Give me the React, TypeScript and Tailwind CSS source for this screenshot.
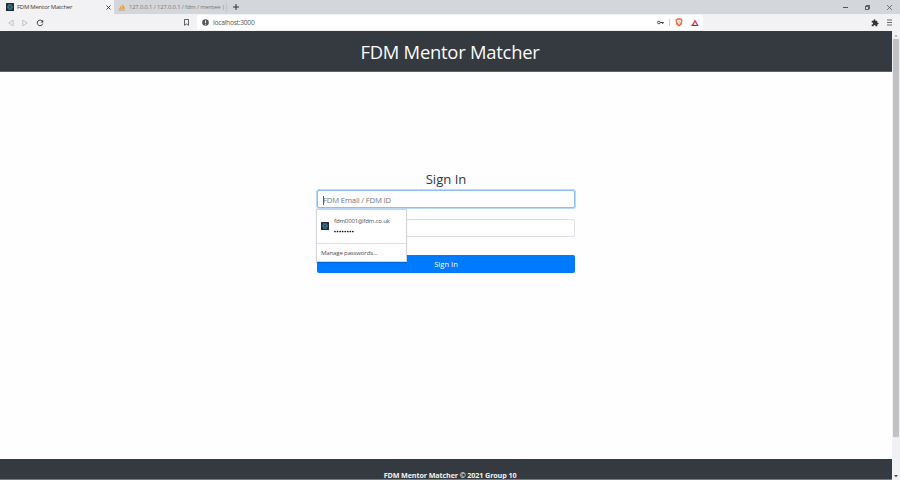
import React from "react";

function AppIcon({ className }: { className: string }) {
  return (
    <svg viewBox="0 0 8 8" className={className}>
      <rect width="8" height="8" rx="0.6" fill="#20272e" />
      <g fill="none" stroke="#4288a6" strokeWidth="0.6">
        <ellipse cx="4" cy="4" rx="3" ry="1.2" />
        <ellipse cx="4" cy="4" rx="3" ry="1.2" transform="rotate(60 4 4)" />
        <ellipse cx="4" cy="4" rx="3" ry="1.2" transform="rotate(120 4 4)" />
      </g>
    </svg>
  );
}

function TabStrip() {
  return (
    <div className="flex h-[14px] items-stretch bg-[#d3d6da] text-[6px] leading-[14px] whitespace-nowrap">
      <div className="flex w-[114px] items-center bg-[#f2f1f3] pl-[6px] text-[#3c3c40]">
        <AppIcon className="h-[8px] w-[8px]" />
        <span className="ml-[3px] w-[89px] tracking-[-0.26px]">FDM Mentor Matcher</span>
        <svg viewBox="0 0 5 5" className="h-[5px] w-[5px]" stroke="#333" strokeWidth="0.9">
          <path d="M.5 .5 4.5 4.5M4.5 .5 .5 4.5" />
        </svg>
      </div>
      <div className="flex w-[112px] items-center pl-[4px] text-[#74777c]">
        <svg viewBox="0 0 8 7" className="h-[7px] w-[8px]">
          <path d="M.4 5.4 3.3 1.2 3.5 5.2ZM3.9 4.9 4.3.5Q6.8 2 6.9 4.8Z" fill="#eda13d" />
          <path d="M.2 6.1Q4 5 7.8 5.7L7 6.6H1Z" fill="#b99c83" />
        </svg>
        <span className="ml-[3px] w-[97px] text-[5.8px] tracking-[-0.13px]">127.0.0.1 / 127.0.0.1 / fdm / mentee | :</span>
      </div>
      <div className="flex flex-1 items-center">
        <span className="h-[9px] w-px bg-[#c3c6ca]" />
        <svg viewBox="0 0 6 6" className="ml-[6px] h-[6px] w-[6px]" stroke="#333" strokeWidth="1">
          <path d="M3 0V6M0 3H6" />
        </svg>
      </div>
      <div className="flex items-center gap-[17px] pr-[8px]">
        <svg viewBox="0 0 5 5" className="h-[5px] w-[5px]" stroke="#333" strokeWidth="0.8"><path d="M0 2.5H5" /></svg>
        <svg viewBox="0 0 5 5" className="h-[5px] w-[5px]" stroke="#333" strokeWidth="0.8" fill="none">
          <path d="M.4 1.4H3.6V4.6H.4ZM1.4 1.4V.4H4.6V3.6H3.6" />
        </svg>
        <svg viewBox="0 0 5 5" className="h-[5px] w-[5px]" stroke="#333" strokeWidth="0.6"><path d="M0 0 5 5M5 0 0 5" /></svg>
      </div>
    </div>
  );
}

function Toolbar() {
  return (
    <div className="flex h-[17px] items-center bg-[#f2f1f3]">
      <svg viewBox="0 0 6 8" className="ml-[8px] h-[8px] w-[6px]" fill="none" stroke="#b8b8bb" strokeWidth="0.8">
        <path d="M5.2 1.1V6.9L.8 4Z" />
      </svg>
      <svg viewBox="0 0 6 8" className="ml-[8px] h-[8px] w-[6px]" fill="none" stroke="#b8b8bb" strokeWidth="0.8">
        <path d="M.8 1.1V6.9L5.2 4Z" />
      </svg>
      <svg viewBox="0 0 8 8" className="ml-[8px] h-[8px] w-[8px]" fill="none" stroke="#34343a" strokeWidth="0.95">
        <path d="M6.5 2.5A2.8 2.8 0 1 0 6.8 4.6" />
        <path d="M7.2 .8V3.4H4.6Z" fill="#34343a" stroke="none" />
      </svg>
      <svg viewBox="0 0 5 7" className="ml-[140px] h-[7px] w-[5px]" fill="none" stroke="#46464b" strokeWidth="0.85">
        <path d="M.5 .5H4.5V6.3L2.5 4.9 .5 6.3Z" />
      </svg>
      <div className="ml-[8px] flex h-[15px] w-[506px] items-center rounded-[2px] bg-white pl-[5px]">
        <svg viewBox="0 0 7 7" className="h-[7px] w-[7px]">
          <circle cx="3.5" cy="3.5" r="3.3" fill="#55565b" />
          <path d="M3.5 1.4V4.1M3.5 4.8V5.7" stroke="white" strokeWidth="0.9" />
        </svg>
        <span className="ml-[4px] flex-1 text-[6.6px] leading-[15px] tracking-[-0.21px] text-[#55565b]">localhost:3000</span>
        <svg viewBox="0 0 7 5" className="h-[5px] w-[7px]" fill="none" stroke="#46464b" strokeWidth="1">
          <circle cx="1.9" cy="2.5" r="1.3" />
          <path d="M3.2 2.5H6.8M5.7 2.5V4" />
        </svg>
        <span className="ml-[5px] h-[7px] w-px bg-[#cfcfd2]" />
        <svg viewBox="0 0 8 9" className="ml-[5px] h-[9px] w-[8px]">
          <path d="M2.2 .3H5.8L7.6 1.8 6.7 6.2 4 8.7 1.3 6.2 .4 1.8Z" fill="#e2643c" />
          <path d="M1.6 2 3 1.6 4 1.9 5 1.6 6.4 2 5.8 4.6 4 7 2.2 4.6Z" fill="#fbe6da" />
          <path d="M4 3.4V5M2.9 3.2 3.6 3.4M5.1 3.2 4.4 3.4" stroke="#ecaa8e" strokeWidth="0.5" />
        </svg>
        <svg viewBox="0 0 8 8" className="mr-[4px] ml-[8px] h-[8px] w-[8px]">
          <path d="M4 .4 .2 7.1H2.2L4 3.6Z" fill="#ee4b32" />
          <path d="M4 .4 7.8 7.1 5.8 5.8 4 3Z" fill="#c03a58" />
          <path d="M.2 7.1H7.8L6 5.8H2Z" fill="#413d8f" />
          <path d="M4 3.4 5.3 5.800H2.7Z" fill="#f4eef2" />
        </svg>
      </div>
      <div className="flex-1" />
      <svg viewBox="0 0 24 24" className="h-[8px] w-[8px]" fill="#333338">
        <path d="M20.5 11H19V7c0-1.1-.9-2-2-2h-4V3.500a2.500 2.500 0 0 0-5 0V5H4a2 2 0 0 0-2 2v3.800h1.500a2.700 2.700 0 0 1 0 5.400H2V20c0 1.100.9 2 2 2h3.800v-1.500a2.700 2.700 0 0 1 5.400 0V22H17a2 2 0 0 0 2-2v-4h1.500a2.500 2.500 0 0 0 0-5Z" />
      </svg>
      <svg viewBox="0 0 5 7" className="mr-[8px] ml-[8px] h-[7px] w-[5px]" stroke="#46464b" strokeWidth="0.8">
        <path d="M0 1H5M0 3.500H5M0 6H5" />
      </svg>
    </div>
  );
}

function PasswordMenu() {
  return (
    <div className="absolute top-[19px] -left-px z-10 h-[53px] w-[91px] border border-[#d4d5d8] bg-white text-[6px] text-[#4c4d52] shadow-[0_1px_1px_rgba(0,0,0,0.15)]">
      <div className="flex h-[34px] items-start border-b border-[#dfdfe2] pl-[4px]">
        <AppIcon className="mt-[12px] h-[8px] w-[8px]" />
        <div className="ml-[5px] pt-[7px]">
          <div className="h-[11px] leading-[8px] tracking-[-0.13px]">fdm0001@fdm.co.uk</div>
          <svg viewBox="0 0 20 6" className="h-[6px] w-[20px]" fill="#111">
            {Array.from({ length: 8 }, (_, i) => (
              <circle key={i} cx={1 + i * 2.55} cy="3.5" r="0.85" />
            ))}
          </svg>
        </div>
      </div>
      <div className="pl-[4px] leading-[18px] tracking-[-0.12px]">Manage passwords...</div>
    </div>
  );
}

function SignInForm() {
  return (
    <div className="mx-auto w-[258px] pt-[98px]">
      <h2 className="h-[20px] text-center text-[13.1px] leading-[19px] text-[#30353a]">Sign In</h2>
      <div className="relative">
        <div className="flex h-[18px] items-center rounded-[2px] border border-[#90bfed] bg-white pt-[2px] pl-[5px] text-[7.7px] text-[#72787f] shadow-[0_0_0_1px_#bbdafa]">
          <span className="h-[9px] w-px bg-[#555b61]" />
          <span className="-ml-px leading-[12px] tracking-[-0.17px]">FDM Email / FDM ID</span>
        </div>
        <PasswordMenu />
      </div>
      <div className="mt-[11px] h-[18px] rounded-[2px] border border-[#dcdfe2] bg-white" />
      <div className="mt-[18px] h-[18px] rounded-[2px] bg-[#007bff] text-center text-[7.6px] leading-[19px] text-white">Sign In</div>
    </div>
  );
}

export default function App() {
  return (
    <div className="flex h-[480px] w-[900px] flex-col overflow-hidden bg-[#fefdff] font-['Open_Sans','Noto_Sans',sans-serif]">
      <TabStrip />
      <Toolbar />
      <div className="flex min-h-0 flex-1">
        <div className="flex w-[892px] flex-col">
          <header className="h-[41px] border-b border-[#5c6166] bg-[#343a40] pl-[8px] text-center text-[18.4px] leading-[42px] tracking-[-0.24px] text-[#fafafa]">
            FDM Mentor Matcher
          </header>
          <main className="flex-1">
            <SignInForm />
          </main>
          <footer className="h-[21px] overflow-hidden border-b border-[#777b7f] bg-[#343a40] pl-[8px] text-center text-[7.2px] leading-[32px] font-bold tracking-[-0.12px] text-[#f2f2f2]">
            FDM Mentor Matcher © 2021 Group 10
          </footer>
        </div>
        <div className="flex w-[8px] flex-col items-center bg-[#f1f0f2]">
          <svg viewBox="0 0 8 8" className="h-[8px] w-[8px] shrink-0"><path d="M2.500 5.500 4 3.700 5.500 5.500Z" fill="#909094" /></svg>
          <div className="h-[398px] w-[6px] shrink-0 bg-[#c1c1c3]" />
          <div className="flex-1" />
          <svg viewBox="0 0 8 8" className="h-[8px] w-[8px] shrink-0"><path d="M2 3 4 5.400 6 3Z" fill="#505054" /></svg>
        </div>
      </div>
    </div>
  );
}
